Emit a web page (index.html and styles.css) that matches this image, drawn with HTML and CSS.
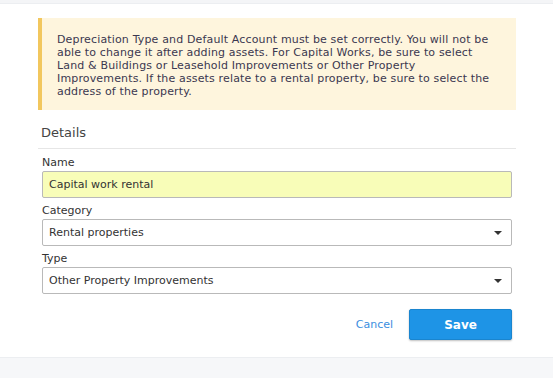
FILE: index.html
```html
<!DOCTYPE html>
<html>
<head>
    <title>Asset Details</title>
    <link rel="stylesheet" href="styles.css">
</head>
<body>
    <div class="topbar"></div>

    <div class="panel">
        <div class="notice">
            Depreciation Type and Default Account must be set correctly. You will not be
            able to change it after adding assets. For Capital Works, be sure to select
            Land &amp; Buildings or Leasehold Improvements or Other Property
            Improvements. If the assets relate to a rental property, be sure to select the
            address of the property.
        </div>

        <h3 class="section-title">Details</h3>

        <form class="form">
            <div class="field">
                <label for="name">Name</label>
                <input type="text" id="name" class="autofilled" value="Capital work rental">
            </div>
            <div class="field">
                <label for="category">Category</label>
                <div class="select-wrap">
                    <select id="category">
                        <option>Rental properties</option>
                    </select>
                </div>
            </div>
            <div class="field">
                <label for="type">Type</label>
                <div class="select-wrap">
                    <select id="type">
                        <option>Other Property Improvements</option>
                    </select>
                </div>
            </div>
            <div class="actions">
                <a href="#" class="cancel">Cancel</a>
                <button type="button" class="save">Save</button>
            </div>
        </form>
    </div>

    <div class="footer"></div>
</body>
</html>
```

FILE: styles.css
```css
body {
    margin: 0;
    font-family: "DejaVu Sans", Verdana, sans-serif;
    font-size: 11px;
    color: #333;
    background: #fff;
}
.topbar {
    height: 3px;
    background: #f4f5f7;
    border-bottom: 1px solid #eceef1;
}
.panel {
    width: 478px;
    margin-left: 38px;
    padding-top: 14px;
    height: 353px;
    box-sizing: border-box;
}
.notice {
    height: 92px;
    box-sizing: border-box;
    background: #fef5dd;
    border-left: 4px solid #f2c75e;
    padding: 15px 22px 0 15px;
    line-height: 13px;
    letter-spacing: 0.15px;
    color: #3b3850;
}
.section-title {
    margin: 0;
    padding: 15px 3px 8px;
    font-size: 13px;
    font-weight: normal;
    color: #444;
    border-bottom: 1px solid #e6e6e6;
}
.form {
    padding: 7px 4px 0;
}
.field {
    margin-bottom: 6px;
}
label {
    display: block;
    line-height: 14px;
    margin-bottom: 1px;
    color: #333;
}
input, select {
    display: block;
    width: 100%;
    height: 27px;
    box-sizing: border-box;
    border: 1px solid #b9b9b9;
    border-radius: 2px;
    padding: 0 6px;
    font-family: inherit;
    font-size: 11px;
    color: #333;
    background: #fff;
    outline: none;
}
.autofilled {
    background: #f8fdb8;
}
select {
    appearance: none;
    -webkit-appearance: none;
}
.select-wrap {
    position: relative;
}
.select-wrap::after {
    content: "";
    position: absolute;
    right: 10px;
    top: 12px;
    border-left: 4px solid transparent;
    border-right: 4px solid transparent;
    border-top: 4px solid #333;
}
.actions {
    display: flex;
    justify-content: flex-end;
    align-items: center;
    gap: 16px;
    margin-top: 15px;
}
.cancel {
    color: #3a8ee0;
    text-decoration: none;
}
.save {
    width: 103px;
    height: 31px;
    background: #1e94e6;
    color: #fff;
    border: 1px solid #1a85cf;
    border-radius: 2px;
    font-family: inherit;
    font-size: 12px;
    font-weight: bold;
    box-shadow: 0 1px 2px rgba(0, 0, 0, 0.25);
    cursor: pointer;
}
.footer {
    height: 21px;
    background: #f6f7f9;
    border-top: 1px solid #eceef1;
}
```
